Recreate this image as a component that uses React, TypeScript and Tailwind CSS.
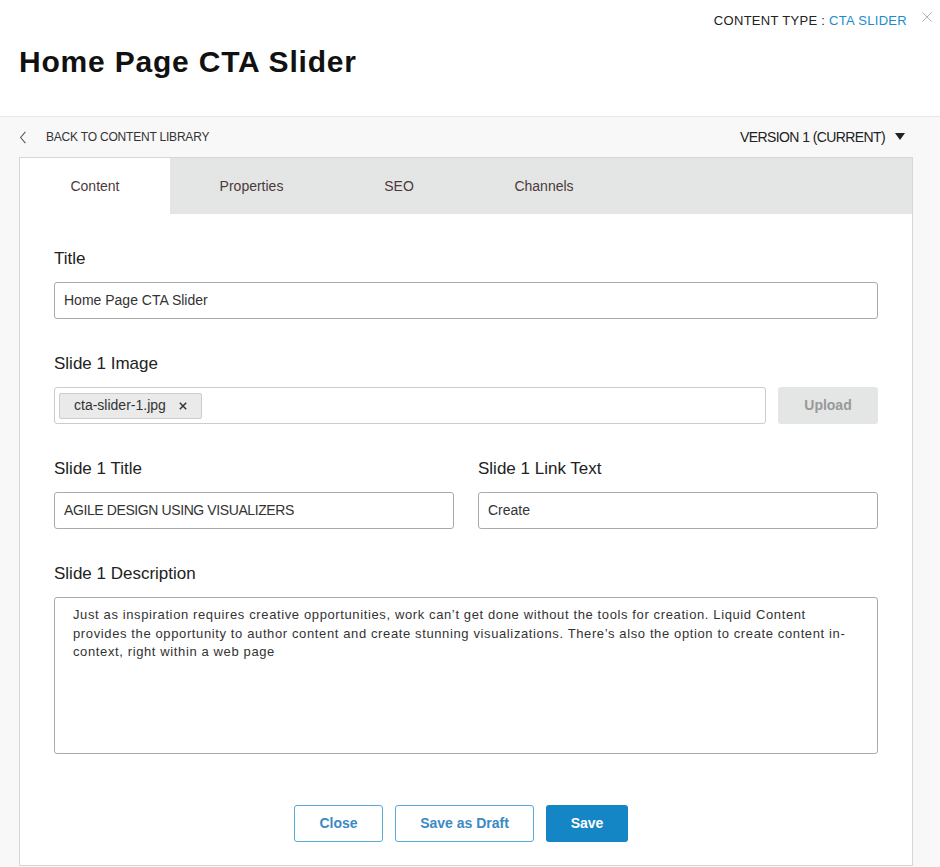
export default function App() {
  return (
    <div className="w-[940px] h-[867px] bg-[#f8f8f8] text-[#333] font-['Liberation_Sans',Arial,sans-serif] overflow-hidden">
      <header className="h-[117px] bg-white border-b border-[#e8e8e8] relative">
        <div className="absolute right-[33px] top-[11px] text-[13px] tracking-[0.3px] text-[#222]">
          CONTENT TYPE : <span className="text-[#1a8ccf]">CTA SLIDER</span>
        </div>
        <button className="absolute right-[3px] top-[9px] w-[16px] h-[16px] text-[#aaa]">
          <svg viewBox="0 0 16 16" className="w-[12px] h-[12px]" stroke="currentColor" strokeWidth="1.2">
            <path d="M2 2L14 14M14 2L2 14" />
          </svg>
        </button>
        <h1 className="pl-[19px] pt-[43px] text-[30px] font-bold leading-[38px] tracking-[0.8px] text-[#111]">Home Page CTA Slider</h1>
      </header>

      <div className="flex items-center justify-between pl-[19px] pr-[35px] h-[40px] text-[12px] text-[#333]">
        <div className="flex items-center gap-[19px]">
          <svg viewBox="0 0 10 16" className="w-[8px] h-[13px]" fill="none" stroke="#555" strokeWidth="1.3">
            <path d="M8 1L2 8L8 15" />
          </svg>
          <span className="tracking-[-0.2px]">BACK TO CONTENT LIBRARY</span>
        </div>
        <div className="flex items-center gap-[10px] text-[14px] text-[#222] tracking-[-0.6px]">
          <span>VERSION 1 (CURRENT)</span>
          <svg viewBox="0 0 10 8" className="w-[10px] h-[8px]" fill="#222">
            <path d="M0 0H10L5 7Z" />
          </svg>
        </div>
      </div>

      <div className="mx-[19px] w-[894px] h-[709px] bg-white border border-[#d6d6d6]">
        <div className="flex h-[56px] bg-[#e4e5e5] text-[14px] text-[#4a3a3a]">
          <div className="w-[150px] bg-white flex items-center justify-center">Content</div>
          <div className="w-[163px] flex items-center justify-center">Properties</div>
          <div className="w-[132px] flex items-center justify-center">SEO</div>
          <div className="w-[158px] flex items-center justify-center">Channels</div>
        </div>

        <div className="px-[34px] pt-[35px]">
          <label className="block text-[17px] leading-[20px] text-[#222]">Title</label>
          <div className="mt-[13px] h-[37px] border border-[#aaa] rounded-[3px] flex items-center px-[9px] text-[14px] text-[#333]">
            Home Page CTA Slider
          </div>

          <label className="block mt-[35px] text-[17px] leading-[20px] text-[#222]">Slide 1 Image</label>
          <div className="mt-[13px] flex gap-[12px]">
            <div className="flex-1 h-[37px] border border-[#ccc] rounded-[3px] flex items-center px-[4px]">
              <span className="flex items-center gap-[13px] h-[26px] px-[14px] bg-[#eaeaea] border border-[#ccc] rounded-[2px] text-[14px] text-[#333]">
                cta-slider-1.jpg
                <svg viewBox="0 0 10 10" className="w-[8px] h-[8px]" stroke="#333" strokeWidth="1.8">
                  <path d="M1 1L9 9M9 1L1 9" />
                </svg>
              </span>
            </div>
            <button className="w-[100px] h-[37px] bg-[#e4e5e5] rounded-[3px] text-[14px] font-bold text-[#999]">Upload</button>
          </div>

          <div className="mt-[35px] grid grid-cols-2 gap-x-[24px]">
            <div>
              <label className="block text-[17px] leading-[20px] text-[#222]">Slide 1 Title</label>
              <div className="mt-[13px] h-[37px] border border-[#aaa] rounded-[3px] flex items-center px-[9px] text-[14px] text-[#333] tracking-[-0.4px]">
                AGILE DESIGN USING VISUALIZERS
              </div>
            </div>
            <div>
              <label className="block text-[17px] leading-[20px] text-[#222]">Slide 1 Link Text</label>
              <div className="mt-[13px] h-[37px] border border-[#aaa] rounded-[3px] flex items-center px-[9px] text-[14px] text-[#333]">
                Create
              </div>
            </div>
          </div>

          <label className="block mt-[35px] text-[17px] leading-[20px] text-[#222]">Slide 1 Description</label>
          <div className="mt-[13px] h-[157px] border border-[#aaa] rounded-[3px] pl-[18px] pr-[4px] pt-[8px] text-[13px] leading-[18.5px] text-[#333] tracking-[0.62px] whitespace-nowrap overflow-hidden">
            Just as inspiration requires creative opportunities, work can’t get done without the tools for creation. Liquid Content
            <br />
            provides the opportunity to author content and create stunning visualizations. There’s also the option to create content in-
            <br />
            context, right within a web page
          </div>

          <div className="mt-[51px] flex justify-center gap-[12px] pr-[10px]">
            <button className="w-[89px] h-[37px] border border-[#5aa9da] rounded-[3px] text-[14px] font-bold text-[#3a8ac4]">Close</button>
            <button className="w-[139px] h-[37px] border border-[#5aa9da] rounded-[3px] text-[14px] font-bold text-[#3a8ac4]">Save as Draft</button>
            <button className="w-[82px] h-[37px] bg-[#1486c6] rounded-[3px] text-[14px] font-bold text-white">Save</button>
          </div>
        </div>
      </div>
    </div>
  );
}
